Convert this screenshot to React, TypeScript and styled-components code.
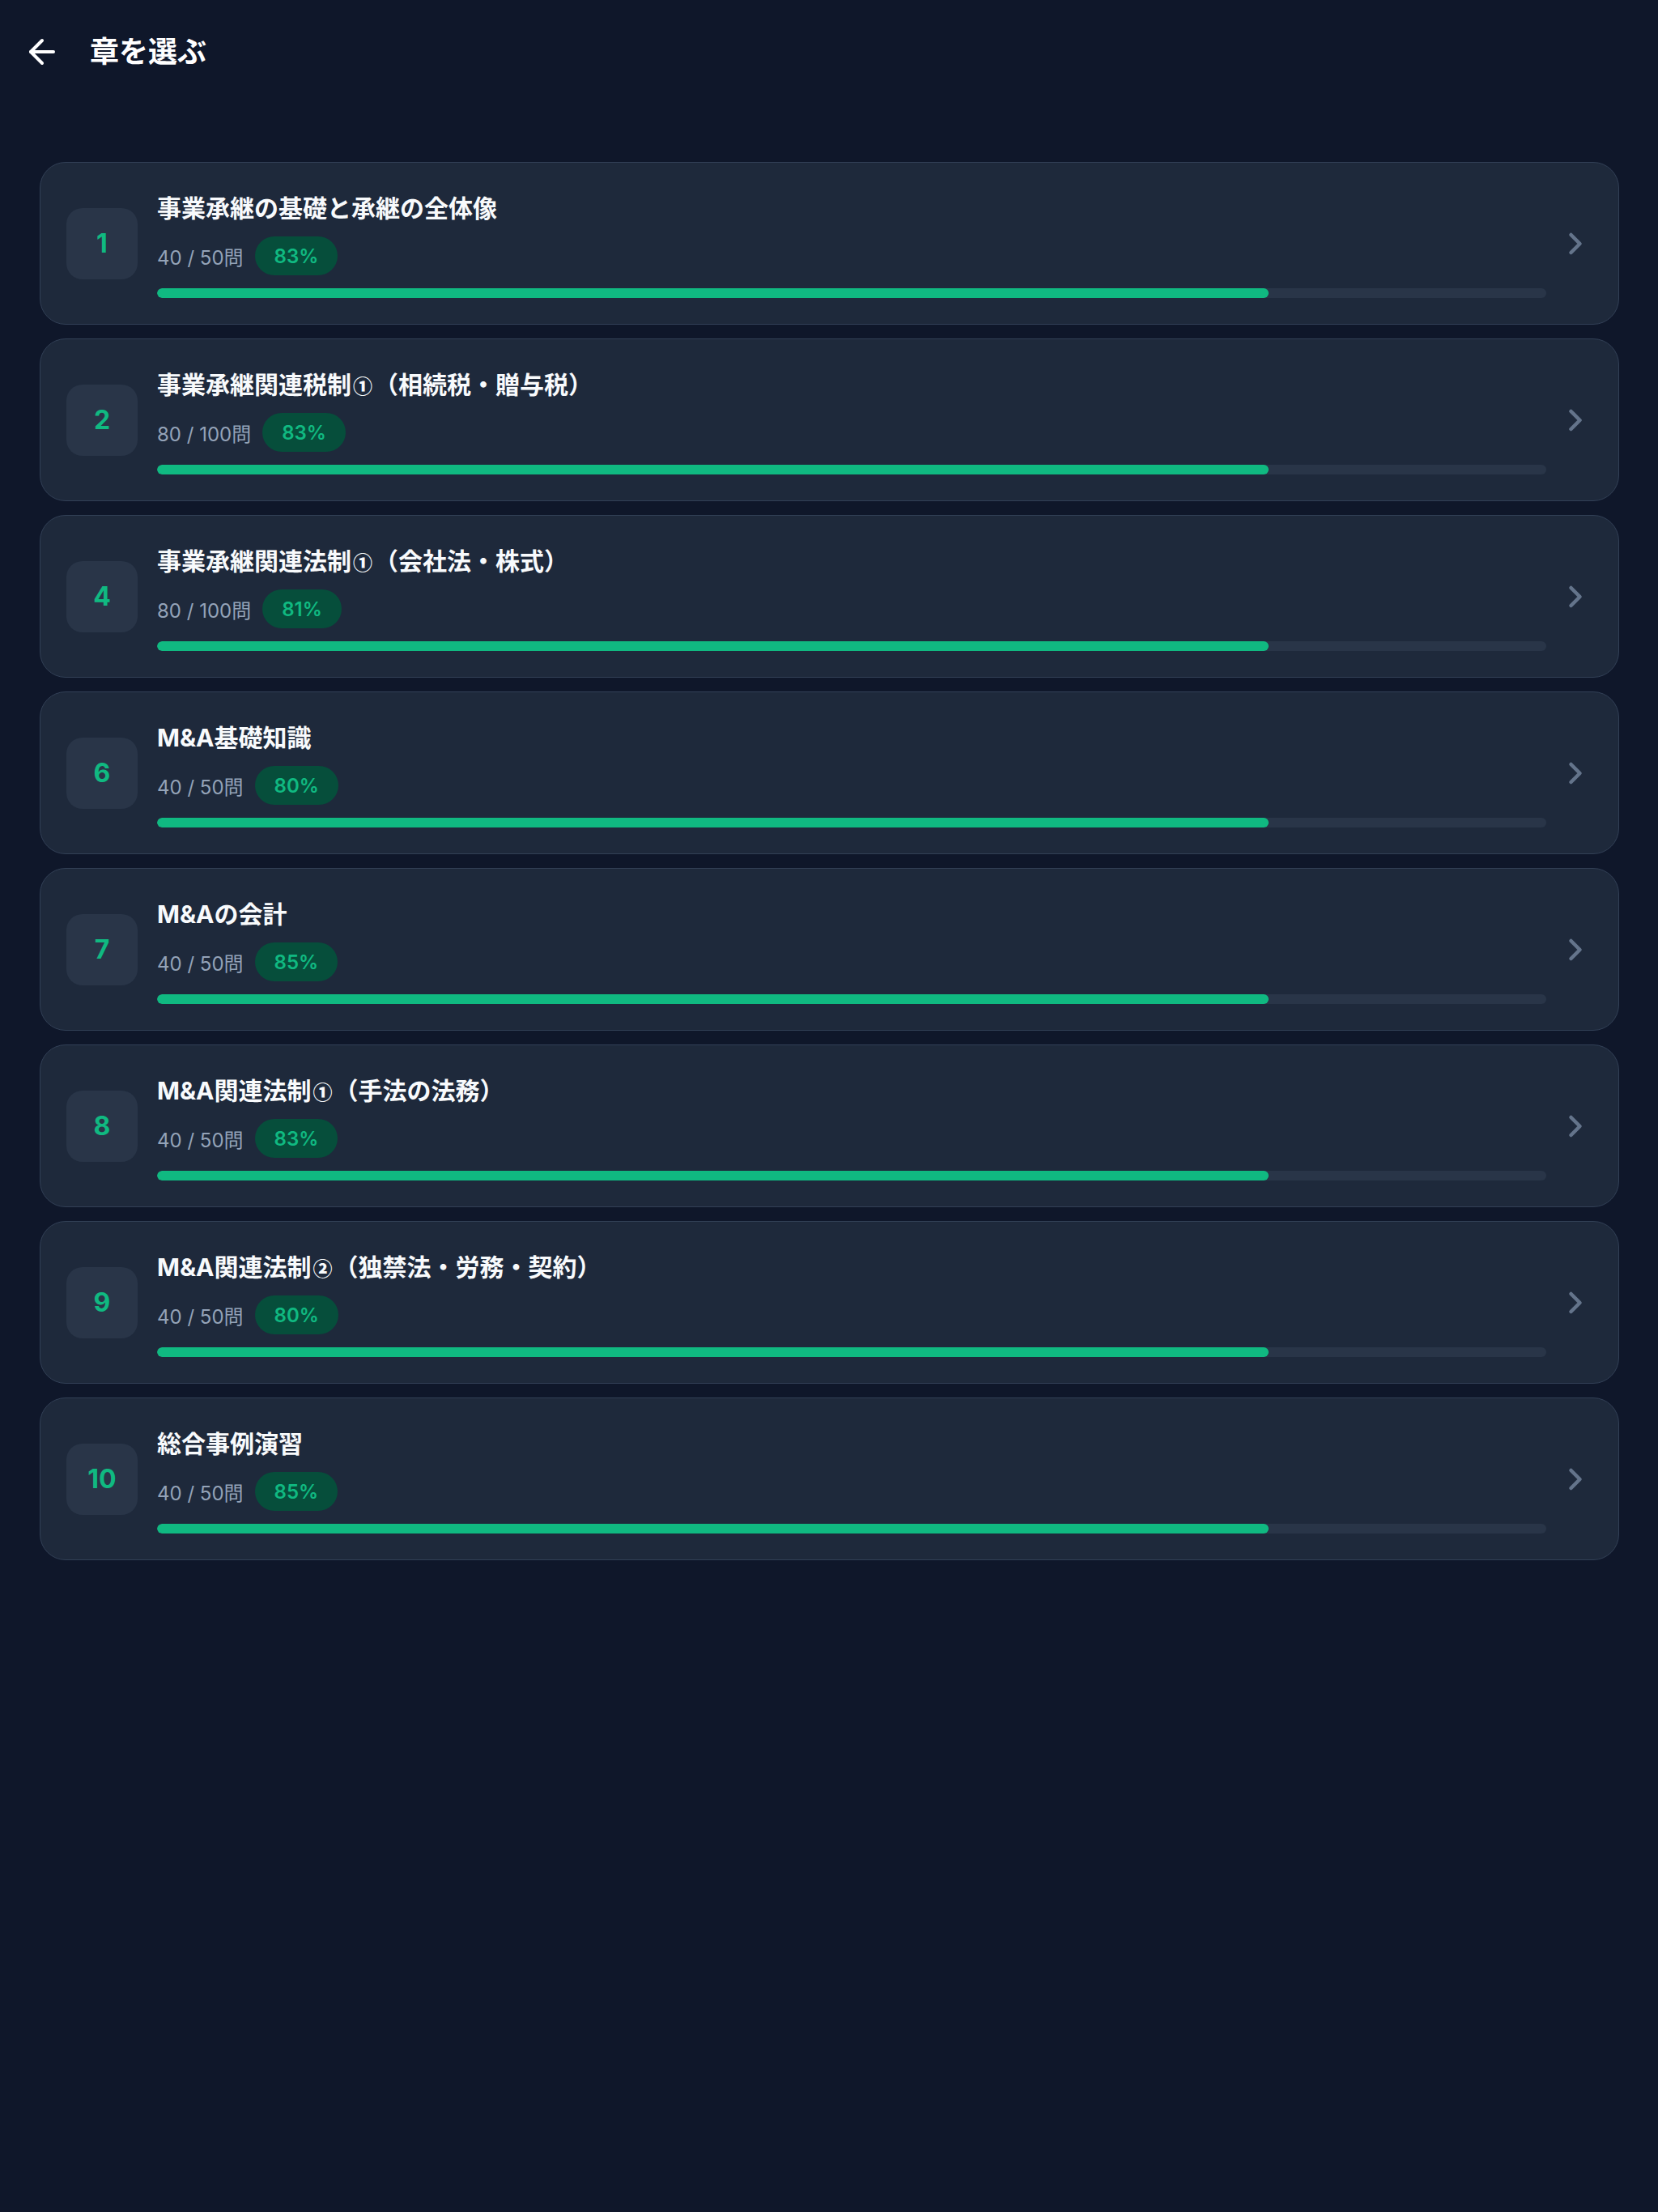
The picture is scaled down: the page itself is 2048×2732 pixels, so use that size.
import React from "react";
import styled, { createGlobalStyle } from "styled-components";
import { ArrowLeft, ChevronRight } from "lucide-react";

const chapters = [
  { no: 1, title: "事業承継の基礎と承継の全体像", done: 40, total: 50, rate: 83 },
  { no: 2, title: "事業承継関連税制①（相続税・贈与税）", done: 80, total: 100, rate: 83 },
  { no: 4, title: "事業承継関連法制①（会社法・株式）", done: 80, total: 100, rate: 81 },
  { no: 6, title: "M&A基礎知識", done: 40, total: 50, rate: 80 },
  { no: 7, title: "M&Aの会計", done: 40, total: 50, rate: 85 },
  { no: 8, title: "M&A関連法制①（手法の法務）", done: 40, total: 50, rate: 83 },
  { no: 9, title: "M&A関連法制②（独禁法・労務・契約）", done: 40, total: 50, rate: 80 },
  { no: 10, title: "総合事例演習", done: 40, total: 50, rate: 85 },
];

// circled digits come out too large in the title font, so set them apart
const renderTitle = (title: string) =>
  title.split(/([①-⑳])/).map((part, i) =>
    /[①-⑳]/.test(part) ? <Circled key={i}>{part}</Circled> : part
  );

const App = () => {
  return (
    <>
      <GlobalStyle />
      <Page>
        <Header>
          <BackButton aria-label="戻る">
            <ArrowLeft size={48} strokeWidth={2} />
          </BackButton>
          <HeaderTitle>章を選ぶ</HeaderTitle>
        </Header>

        <ChapterList>
          {chapters.map((c) => (
            <ChapterCard key={c.no}>
              <NumberBox>{c.no}</NumberBox>
              <ChapterBody>
                <ChapterTitle>{renderTitle(c.title)}</ChapterTitle>
                <MetaRow>
                  <Count>
                    {c.done} / {c.total}問
                  </Count>
                  <RateBadge>{c.rate}%</RateBadge>
                </MetaRow>
                <Track>
                  <Fill style={{ width: `${(c.done / c.total) * 100}%` }} />
                </Track>
              </ChapterBody>
              <Chevron>
                <ChevronRight size={44} strokeWidth={2.5} />
              </Chevron>
            </ChapterCard>
          ))}
        </ChapterList>
      </Page>
    </>
  );
};

export default App;

const GlobalStyle = createGlobalStyle`
  html, body {
    margin: 0;
    padding: 0;
    background: #0f172a;
  }
  body {
    font-family: "Inter", "Noto Sans CJK JP", sans-serif;
    color: #f8fafc;
  }
`;

const Page = styled.div`
  min-height: 2732px;
  background: #0f172a;
`;

const Header = styled.header`
  height: 128px;
  display: flex;
  align-items: center;
  gap: 35px;
  padding-left: 28px;
`;

const BackButton = styled.button`
  width: 48px;
  height: 48px;
  padding: 0;
  border: none;
  background: none;
  color: #ffffff;
  display: flex;
  align-items: center;
  justify-content: center;
  cursor: pointer;
`;

const HeaderTitle = styled.h1`
  margin: 0;
  font-size: 36px;
  font-weight: 700;
  line-height: 1.4;
  color: #ffffff;
`;

const ChapterList = styled.div`
  display: flex;
  flex-direction: column;
  gap: 17px;
  padding: 72px 48px 0 49px;
`;

const ChapterCard = styled.div`
  display: flex;
  align-items: center;
  height: 201px;
  box-sizing: border-box;
  padding: 0 31px 0 32px;
  background: #1e293b;
  border: 1px solid #324056;
  border-radius: 32px;
  cursor: pointer;
`;

const NumberBox = styled.div`
  flex: 0 0 88px;
  height: 88px;
  border-radius: 20px;
  background: rgba(51, 65, 85, 0.5);
  display: flex;
  align-items: center;
  justify-content: center;
  font-size: 32px;
  font-weight: 700;
  color: #10b981;
`;

const ChapterBody = styled.div`
  flex: 1;
  min-width: 0;
  margin-left: 24px;
  padding-top: 2px;
  display: flex;
  flex-direction: column;
`;

const ChapterTitle = styled.div`
  font-size: 30px;
  font-weight: 700;
  line-height: 44px;
  height: 44px;
  color: #f8fafc;
  white-space: nowrap;
`;

const Circled = styled.span`
  font-family: "Noto Sans CJK JP", sans-serif;
  font-size: 24px;
  font-weight: 900;
  margin: 0 2px;
`;

const MetaRow = styled.div`
  display: flex;
  align-items: center;
  gap: 14px;
  margin-top: 13px;
  height: 48px;
`;

const Count = styled.span`
  font-size: 24px;
  color: #94a3b8;
`;

const RateBadge = styled.span`
  height: 48px;
  padding: 0 24px;
  border-radius: 24px;
  background: #064e3b;
  color: #10b981;
  font-size: 24px;
  font-weight: 600;
  display: flex;
  align-items: center;
`;

const Track = styled.div`
  margin-top: 16px;
  height: 12px;
  border-radius: 6px;
  background: rgba(51, 65, 85, 0.5);
  overflow: hidden;
`;

const Fill = styled.div`
  height: 100%;
  border-radius: 6px;
  background: #10b981;
`;

const Chevron = styled.div`
  flex: 0 0 44px;
  margin-left: 14px;
  display: flex;
  align-items: center;
  justify-content: center;
  color: #64748b;
`;
